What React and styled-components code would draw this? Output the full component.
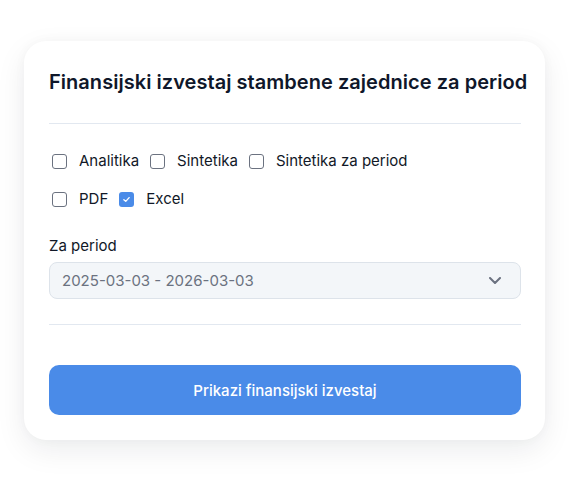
import React from 'react';
import styled, { createGlobalStyle } from 'styled-components';

const GlobalStyle = createGlobalStyle`
  html, body {
    margin: 0;
    padding: 0;
    background: #ffffff;
    font-family: 'Inter', 'Noto Sans', sans-serif;
  }
`;

const Page = styled.div`
  padding: 41px 25px 42px 24px;
`;

const Card = styled.div`
  background: #ffffff;
  border-radius: 22px;
  box-shadow: 0 10px 30px rgba(15, 23, 42, 0.08), 0 0 12px rgba(15, 23, 42, 0.03);
  padding: 27px 24px 25px 25px;
`;

const Title = styled.h2`
  margin: 0;
  font-size: 20px;
  font-weight: 600;
  color: #0f172a;
  line-height: 28px;
  letter-spacing: 0.04px;
  white-space: nowrap;
`;

const Divider = styled.hr`
  border: none;
  border-top: 1px solid #e2e8f0;
  margin: ${p => p.$top}px 0 ${p => p.$bottom}px;
`;

const OptionRow = styled.div`
  display: flex;
  align-items: center;
  gap: 8px;
  height: 20px;
  margin-bottom: ${p => p.$mb || 0}px;
`;

const Option = styled.label`
  display: flex;
  align-items: center;
  gap: 12px;
  font-size: 15px;
  color: #111827;
  line-height: 20px;
`;

const Box = styled.span`
  width: 15px;
  height: 15px;
  margin-left: 3px;
  box-sizing: border-box;
  border-radius: 3px;
  border: ${p => (p.$checked ? 'none' : '1.5px solid #6b7280')};
  background: ${p => (p.$checked ? '#4a8be8' : '#ffffff')};
  display: flex;
  align-items: center;
  justify-content: center;
`;

const FieldLabel = styled.div`
  font-size: 15px;
  color: #111827;
  line-height: 20px;
  margin-bottom: 6px;
`;

const Select = styled.div`
  height: 37px;
  box-sizing: border-box;
  border: 1px solid #dde3ea;
  border-radius: 8px;
  background: #f3f6f9;
  display: flex;
  align-items: center;
  justify-content: space-between;
  padding: 0 19px 0 12px;
  font-size: 15px;
  color: #6b7280;
`;

const Button = styled.button`
  display: block;
  width: 100%;
  height: 50px;
  border: none;
  border-radius: 10px;
  background: #4a8be8;
  color: #ffffff;
  font-family: inherit;
  font-size: 15px;
  font-weight: 500;
`;

const Check = ({ label, checked }) => (
  <Option>
    <Box $checked={checked}>
      {checked && (
        <svg width="9" height="9" viewBox="0 0 12 12">
          <path d="M2.5 6.2 L5 8.5 L9.5 3.5" fill="none" stroke="#fff" strokeWidth="1.8" strokeLinecap="round" strokeLinejoin="round" />
        </svg>
      )}
    </Box>
    {label}
  </Option>
);

const App = () => {
  return (
    <>
      <GlobalStyle />
      <Page>
        <Card>
          <Title>Finansijski izvestaj stambene zajednice za period</Title>
          <Divider $top={27} $bottom={27} />
          <OptionRow $mb={18}>
            <Check label="Analitika" />
            <Check label="Sintetika" />
            <Check label="Sintetika za period" />
          </OptionRow>
          <OptionRow $mb={27}>
            <Check label="PDF" />
            <Check label="Excel" checked />
          </OptionRow>
          <FieldLabel>Za period</FieldLabel>
          <Select>
            <span>2025-03-03 - 2026-03-03</span>
            <svg width="12" height="7" viewBox="0 0 12 7" fill="none" stroke="#6b7280" strokeWidth="2" strokeLinecap="round" strokeLinejoin="round">
              <path d="M1 1l5 5 5-5" />
            </svg>
          </Select>
          <Divider $top={25} $bottom={40} />
          <Button>Prikazi finansijski izvestaj</Button>
        </Card>
      </Page>
    </>
  );
};

export default App;
